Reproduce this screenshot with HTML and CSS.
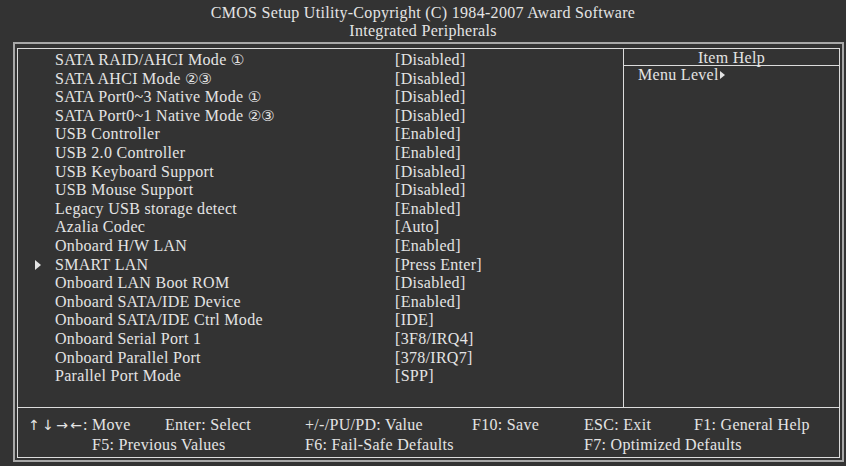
FILE: index.html
```html
<!DOCTYPE html>
<html>

<head>
    <meta charset="UTF-8">
    <title>CMOS Setup Utility</title>
    <link rel="stylesheet" href="styles.css">
</head>

<body>
    <div class="title">
        <div>CMOS Setup Utility-Copyright (C) 1984-2007 Award Software</div>
        <div>Integrated Peripherals</div>
    </div>
    <div class="frame">
        <div class="inner">
            <div class="main">
                <div class="items">
                    <div class="row"><span class="mark"></span><span>SATA RAID/AHCI Mode <span class="num">①</span></span><span>[Disabled]</span></div>
                    <div class="row"><span class="mark"></span><span>SATA AHCI Mode <span class="num">②③</span></span><span>[Disabled]</span></div>
                    <div class="row"><span class="mark"></span><span>SATA Port0~3 Native Mode <span class="num">①</span></span><span>[Disabled]</span></div>
                    <div class="row"><span class="mark"></span><span>SATA Port0~1 Native Mode <span class="num">②③</span></span><span>[Disabled]</span></div>
                    <div class="row"><span class="mark"></span><span>USB Controller</span><span>[Enabled]</span></div>
                    <div class="row"><span class="mark"></span><span>USB 2.0 Controller</span><span>[Enabled]</span></div>
                    <div class="row"><span class="mark"></span><span>USB Keyboard Support</span><span>[Disabled]</span></div>
                    <div class="row"><span class="mark"></span><span>USB Mouse Support</span><span>[Disabled]</span></div>
                    <div class="row"><span class="mark"></span><span>Legacy USB storage detect</span><span>[Enabled]</span></div>
                    <div class="row"><span class="mark"></span><span>Azalia Codec</span><span>[Auto]</span></div>
                    <div class="row"><span class="mark"></span><span>Onboard H/W LAN</span><span>[Enabled]</span></div>
                    <div class="row"><span class="mark"><i class="tri"></i></span><span>SMART LAN</span><span>[Press Enter]</span></div>
                    <div class="row"><span class="mark"></span><span>Onboard LAN Boot ROM</span><span>[Disabled]</span></div>
                    <div class="row"><span class="mark"></span><span>Onboard SATA/IDE Device</span><span>[Enabled]</span></div>
                    <div class="row"><span class="mark"></span><span>Onboard SATA/IDE Ctrl Mode</span><span>[IDE]</span></div>
                    <div class="row"><span class="mark"></span><span>Onboard Serial Port 1</span><span>[3F8/IRQ4]</span></div>
                    <div class="row"><span class="mark"></span><span>Onboard Parallel Port</span><span>[378/IRQ7]</span></div>
                    <div class="row"><span class="mark"></span><span>Parallel Port Mode</span><span>[SPP]</span></div>
                </div>
                <div class="help">
                    <div class="helpHead">Item Help</div>
                    <div class="helpText">Menu Level<i class="tri small"></i></div>
                </div>
            </div>
            <div class="footer">
                <span class="c1 s2"><span class="arrow">↑</span><span class="arrow">↓</span><span class="arrow">→</span><span class="arrow">←</span>: Move</span>
                <span class="c3">Enter: Select</span>
                <span class="c4">+/-/PU/PD: Value</span>
                <span class="c5">F10: Save</span>
                <span class="c6">ESC: Exit</span>
                <span class="c7">F1: General Help</span>
                <span class="c2 s2">F5: Previous Values</span>
                <span class="c4 s2">F6: Fail-Safe Defaults</span>
                <span class="c6 s2">F7: Optimized Defaults</span>
            </div>
        </div>
    </div>
</body>
</html>
```

FILE: styles.css
```css
* {
    font-family: 'Liberation Serif', 'DejaVu Serif', 'Noto Sans CJK JP', serif;
    box-sizing: border-box;
}
body {
    margin: 0;
    width: 846px;
    height: 466px;
    background: #333333;
    color: #e4e4e4;
    font-size: 16px;
    letter-spacing: 0.3px;
    overflow: hidden;
}
.title {
    padding-top: 4px;
    line-height: 18px;
    text-align: center;
}
.frame {
    height: 420px;
    margin: 2px 2px 0 13px;
    padding: 4px 2px 2px 2px;
    border: 2px solid #a8a8a8;
}
.inner {
    height: 410px;
    border: 1px solid #dcdcdc;
}
.main {
    display: grid;
    grid-template-columns: 606px 1fr;
    height: 359px;
    border-bottom: 1px solid #dcdcdc;
}
.items {
    display: grid;
    grid-auto-rows: 18.6px;
    align-content: start;
    padding-top: 2px;
    border-right: 1px solid #dcdcdc;
}
.row {
    display: grid;
    grid-template-columns: 37px 340px 1fr;
    line-height: 18.6px;
    white-space: nowrap;
    overflow: hidden;
}
.mark {
    display: flex;
    align-items: center;
    padding-left: 17px;
}
.num {
    font-family: 'DejaVu Sans', 'Noto Sans CJK JP', sans-serif;
    font-size: 15px;
    line-height: 0;
    letter-spacing: 0;
}
.tri {
    display: inline-block;
    width: 0;
    height: 0;
    border-left: 6px solid #e4e4e4;
    border-top: 5px solid transparent;
    border-bottom: 5px solid transparent;
}
.tri.small {
    border-left-width: 5px;
    border-top-width: 4.5px;
    border-bottom-width: 4.5px;
    margin-left: 1px;
    vertical-align: 1px;
}
.helpHead {
    padding-top: 1px;
    line-height: 15px;
    text-align: center;
    border-bottom: 1px solid #dcdcdc;
}
.helpText {
    padding-left: 14px;
    line-height: 18px;
}
.footer {
    display: grid;
    grid-template-columns: 65px 73px 140px 167px 112px 110px 1fr;
    padding: 7px 0 0 9px;
    line-height: 19px;
    white-space: nowrap;
}
.arrow {
    display: inline-block;
    width: 14px;
    font-family: 'DejaVu Sans', sans-serif;
    font-size: 14px;
    letter-spacing: 0;
    text-align: center;
}
.c1 { grid-column: 1; }
.c2 { grid-column: 2; }
.c3 { grid-column: 3; }
.c4 { grid-column: 4; }
.c5 { grid-column: 5; }
.c6 { grid-column: 6; }
.c7 { grid-column: 7; }
.s2 { grid-column-end: span 2; }
```
